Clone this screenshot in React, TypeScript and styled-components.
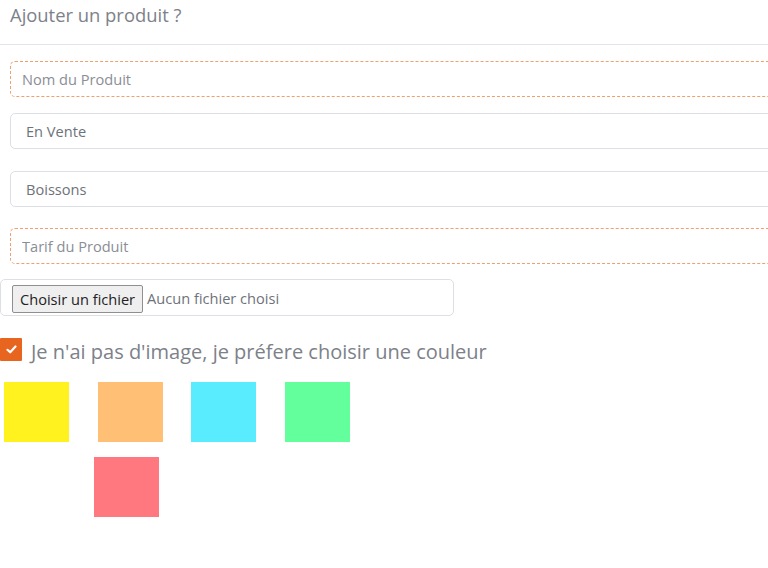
import React from "react";
import styled, { createGlobalStyle } from "styled-components";

const GlobalStyle = createGlobalStyle`
  html, body {
    margin: 0;
    padding: 0;
    background: #fff;
    overflow: hidden;
  }
  body {
    font-family: "Open Sans", "Noto Sans", sans-serif;
    color: #6c757d;
  }
`;

const Page = styled.div`
  width: 820px;
  display: flex;
  flex-direction: column;
`;

const Header = styled.div`
  height: 45px;
  padding-left: 10px;
  border-bottom: 1px solid #e3e5ea;
  font-size: 18.4px;
  line-height: 30px;
  color: #7d8189;
  box-sizing: border-box;
`;

const Form = styled.div`
  display: flex;
  flex-direction: column;
  padding-top: 16px;
`;

const TextField = styled.input`
  margin: 0 0 0 10px;
  height: 36px;
  box-sizing: border-box;
  border: 1px dashed #f0a06c;
  border-radius: 5px;
  padding: 0 11px;
  font-family: "Open Sans", "Noto Sans", sans-serif;
  font-size: 14.6px;
  color: #555;
  outline: none;

  &::placeholder {
    color: #8a8e96;
  }
`;

const Select = styled.select<{ $spaceBelow: number }>`
  margin: 0 0 ${(p) => p.$spaceBelow}px 10px;
  height: 36px;
  box-sizing: border-box;
  border: 1px solid #dcdfe5;
  border-radius: 5px;
  padding: 0 15px;
  font-family: "Open Sans", "Noto Sans", sans-serif;
  font-size: 14.6px;
  color: #6e727a;
  background: #fff;
  appearance: none;
  outline: none;
`;

const Spaced = styled.div<{ $below: number }>`
  display: flex;
  flex-direction: column;
  margin-bottom: ${(p) => p.$below}px;
`;

const FileBox = styled.label`
  width: 454px;
  height: 37px;
  box-sizing: border-box;
  border: 1px solid #dcdfe5;
  border-radius: 5px;
  display: flex;
  align-items: center;
  padding-left: 11px;
  gap: 4px;
  font-size: 14.6px;
  color: #6e727a;
`;

const FileButton = styled.span`
  height: 28px;
  box-sizing: border-box;
  padding: 0 7px;
  display: flex;
  align-items: center;
  background: #efefef;
  border: 1px solid #8f8f8f;
  border-radius: 2px;
  color: #222;
  font-size: 14.6px;
  margin-top: 2px;
`;

const CheckRow = styled.label`
  display: flex;
  align-items: center;
  gap: 9px;
  margin-top: 21px;
  height: 24px;
  font-size: 20px;
  color: #7d8189;
`;

const CheckLabel = styled.span`
  padding-top: 5px;
`;

const CheckBox = styled.span`
  width: 22px;
  height: 23px;
  background: #e8651f;
  display: flex;
  align-items: center;
  justify-content: center;
  border-radius: 1px;
`;

const Swatches = styled.div`
  display: flex;
  flex-direction: column;
  gap: 15px;
  margin-top: 21px;
`;

const SwatchRow = styled.div<{ $indent: number }>`
  display: flex;
  gap: 28.6px;
  padding-left: ${(p) => p.$indent}px;
`;

const Swatch = styled.div<{ $color: string }>`
  width: 65px;
  height: 60px;
  background: ${(p) => p.$color};
`;

export default function App() {
  return (
    <Page>
      <GlobalStyle />
      <Header>Ajouter un produit ?</Header>
      <Form>
        <Spaced $below={16}>
          <TextField placeholder="Nom du Produit" />
        </Spaced>
        <Select $spaceBelow={22} defaultValue="vente">
          <option value="vente">En Vente</option>
        </Select>
        <Select $spaceBelow={21} defaultValue="boissons">
          <option value="boissons">Boissons</option>
        </Select>
        <Spaced $below={15}>
          <TextField placeholder="Tarif du Produit" />
        </Spaced>
        <FileBox>
          <FileButton>Choisir un fichier</FileButton>
          Aucun fichier choisi
        </FileBox>
        <CheckRow>
          <CheckBox>
            <svg width="11" height="9" viewBox="0 0 11 9">
              <path
                d="M1.5 4.8 L4.2 7.3 L9.5 1.5"
                fill="none"
                stroke="#fff"
                strokeWidth="2.2"
                strokeLinecap="round"
                strokeLinejoin="round"
              />
            </svg>
          </CheckBox>
          <CheckLabel>Je n'ai pas d'image, je préfere choisir une couleur</CheckLabel>
        </CheckRow>
        <Swatches>
          <SwatchRow $indent={4}>
            <Swatch $color="#fff21f" />
            <Swatch $color="#ffbf75" />
            <Swatch $color="#59ecff" />
            <Swatch $color="#63ff9c" />
          </SwatchRow>
          <SwatchRow $indent={94}>
            <Swatch $color="#ff7880" />
          </SwatchRow>
        </Swatches>
      </Form>
    </Page>
  );
}
